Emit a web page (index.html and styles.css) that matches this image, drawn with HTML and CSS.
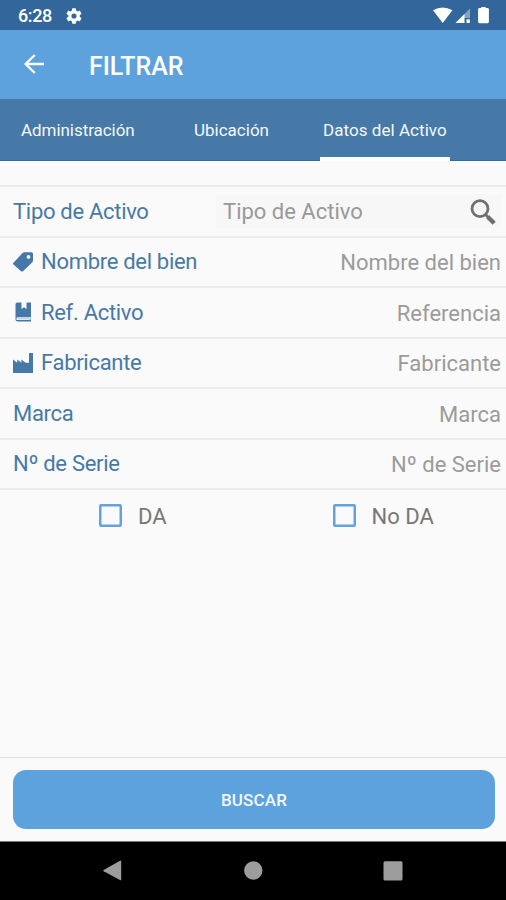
FILE: index.html
```html
<!DOCTYPE html>
<html lang="es">
<head>
<meta charset="utf-8">
<title>Filtrar</title>
<link rel="stylesheet" href="styles.css">
</head>
<body>
<div class="screen">
  <div class="status">
    <span class="time">6:28</span>
    <svg class="gear" viewBox="2 2 20 20"><path fill-rule="evenodd" d="M19.14 12.94a7.5 7.5 0 0 0 0-1.88l2.03-1.58a.5.5 0 0 0 .12-.61l-1.92-3.32a.5.5 0 0 0-.59-.22l-2.39.96a7 7 0 0 0-1.62-.94l-.36-2.54a.5.5 0 0 0-.48-.41h-3.84a.5.5 0 0 0-.47.41l-.36 2.54a7 7 0 0 0-1.62.94l-2.39-.96a.5.5 0 0 0-.59.22L2.74 8.87a.5.5 0 0 0 .12.61l2.03 1.58a7.5 7.5 0 0 0 0 1.88l-2.03 1.58a.5.5 0 0 0-.12.61l1.92 3.32c.12.22.37.29.59.22l2.39-.96c.5.38 1.03.7 1.62.94l.36 2.54c.05.24.24.41.48.41h3.84c.24 0 .44-.17.47-.41l.36-2.54a7 7 0 0 0 1.62-.94l2.39.96c.22.08.47 0 .59-.22l1.92-3.32a.5.5 0 0 0-.12-.61zM12 15.2a3.2 3.2 0 1 1 0-6.4 3.2 3.2 0 0 1 0 6.4z"/></svg>
    <svg class="indicators" viewBox="0 0 58 18"><path d="M0 3.2Q9.700-2.400 19.400 3.200L9.700 16z"/><path d="M37 1.500V11H31V16H22.500z" opacity=".4"/><path d="M31.500 7V16H22.500z"/><path d="M33.500 12.300h3.300V16h-3.300z"/><path d="M48.300 1V0h4.400v1h1.800q1.400 0 1.400 1.400v12.400q0 1.400-1.400 1.400h-8q-1.400 0-1.400-1.400V2.400Q45.100 1 46.500 1z"/></svg>
  </div>
  <header class="appbar">
    <svg class="back" viewBox="0 0 20 20"><path d="M20 10H1.500M10.800 1 1.600 10l9.200 9"/></svg>
    <h1>FILTRAR</h1>
  </header>
  <nav class="tabs">
    <span class="tab admin">Administración</span>
    <span class="tab place">Ubicación</span>
    <span class="tab active">Datos del Activo</span>
  </nav>
  <main>
    <div class="row type">
      <span class="label">Tipo de Activo</span>
      <div class="search"><span>Tipo de Activo</span>
        <svg viewBox="0 0 26 26"><circle cx="10" cy="9.700" r="8"/><path class="neck" d="m15.500 15.500 3 3"/><path class="handle" d="m17.700 17.700 6.500 6.500"/></svg>
      </div>
    </div>
    <div class="row"><svg class="icon" viewBox="0 0 20 20"><path fill-rule="evenodd" d="M0 11.200 9.300 1.300Q10.300.3 11.500.3H18.500Q20 .3 20 1.800V8.200Q20 9.500 19.100 10.400L10 19.200Q8.800 20 7.800 19L.5 12.600Q-.2 12 0 11.200zM15.500 3a1.900 1.900 0 1 0 0 3.800 1.900 1.900 0 0 0 0-3.800z"/></svg><span class="label">Nombre del bien</span><span class="value">Nombre del bien</span></div>
    <div class="row"><svg class="icon" viewBox="0 0 20 20"><path d="M4.500.5H8.500V7l2.500-1.700L13.500 7V.5H18V15.300H4.500Q3.500 15.300 3.500 16.500V18H17V16.500H18V19.500H5Q2.500 19.500 2.500 17V2.500Q2.500.5 4.500.5z"/><path d="M4.500 16.600H18" class="pages"/></svg><span class="label">Ref. Activo</span><span class="value">Referencia</span></div>
    <div class="row"><svg class="icon" viewBox="0 0 20 20"><path d="M0 6.500 4.200 9.800V6.500l4.200 3.300V6.500l4.200 3.300H16V0H20V20H0z"/></svg><span class="label">Fabricante</span><span class="value">Fabricante</span></div>
    <div class="row"><span class="label">Marca</span><span class="value">Marca</span></div>
    <div class="row"><span class="label">Nº de Serie</span><span class="value">Nº de Serie</span></div>
    <div class="checks">
      <div class="check"><i class="box"></i><span>DA</span></div>
      <div class="check"><i class="box"></i><span>No DA</span></div>
    </div>
  </main>
  <footer class="actions"><button>BUSCAR</button></footer>
  <div class="system">
    <svg viewBox="0 0 20 22"><path d="M.7 10.100 17 .7q1.200-.6 1.200.7v18q0 1.300-1.200.7L.7 11.300q-.8-.6 0-1.200z"/></svg>
    <svg viewBox="0 0 20 22"><circle cx="10.300" cy="10.500" r="9.200"/></svg>
    <svg viewBox="0 0 20 22"><rect x=".5" y="1.200" width="19" height="19.300" rx="1.500"/></svg>
  </div>
</div>
</body>
</html>
```
FILE: styles.css
```css
* { box-sizing: border-box; }
body { margin: 0; font-family: Roboto, sans-serif; background: #fafafa; }
.screen { width: 506px; height: 900px; display: flex; flex-direction: column; overflow: hidden; }
.status { height: 30px; background: #33669a; display: flex; align-items: center; padding: 2px 15px 0 18px; color: #fff; }
.time { width: 35px; font-size: 18px; font-weight: 500; line-height: 28px; letter-spacing: -0.400px; }
.gear { width: 16px; height: 16px; margin-left: 13px; fill: #fff; }
.indicators { width: 58px; height: 18px; margin-left: auto; fill: #fff; }
.appbar { height: 69px; background: #5ea2dd; display: flex; align-items: center; padding: 2px 0 0 24px; color: #fff; }
.back { width: 20px; height: 20px; margin-top: -3px; fill: none; stroke: #fff; stroke-width: 2.3; }
h1 { margin: 2px 0 0 45px; font-size: 25px; font-weight: 500; line-height: 30px; }
.tabs { height: 61.500px; flex-shrink: 0; background: #4678a8; border-bottom: 1px solid #336b9b; display: flex; color: #f4f8fc; font-size: 17px; line-height: 62px; }
.tab { white-space: nowrap; }
.admin { margin-left: 21px; width: 173px; letter-spacing: -0.050px; }
.place { width: 126px; }
.active { width: 130px; height: 61.500px; padding-left: 3px; border-bottom: 4px solid #fff; letter-spacing: 0.050px; }
main { flex: 1; padding-top: 24.500px; color: #777; font-size: 22px; }
.row { height: 50.500px; border-bottom: 2px solid #ececed; display: flex; align-items: center; padding: 0 5px 0 13px; white-space: nowrap; }
.type { height: 52.500px; border-top: 2px solid #ececed; }
.label { color: #4779a7; letter-spacing: -0.300px; }
.icon { width: 20px; height: 20px; margin-right: 8px; fill: #4678a8; }
.pages { stroke: #c3d2e0; stroke-width: 1.800; }
.value { margin-left: auto; color: #9b9b9b; position: relative; top: 1px; }
.search { margin-left: auto; width: 285px; height: 34px; background: #f7f7f7; display: flex; align-items: center; justify-content: space-between; padding: 0 5px 0 7px; color: #999; border-radius: 2px; }
.search svg { width: 26px; height: 26px; margin-top: 2px; fill: none; stroke: #707070; stroke-width: 2.800; }
.search .handle { stroke-width: 4.400; }
.checks { height: 53px; display: flex; padding-left: 99px; align-items: center; }
.check { width: 233.500px; flex-shrink: 0; display: flex; align-items: center; gap: 16px; }
.check:last-child { width: 150px; }
.box { width: 23px; height: 23px; border: 2px solid #62a3de; box-shadow: inset 0 0 0 0.500px #62a3de; border-radius: 2px; margin-top: -2px; }
.actions { height: 85px; flex-shrink: 0; border-top: 1px solid #dedfe0; border-bottom: 1px solid #777; padding: 12px 11px 0 13px; }
button { display: block; width: 482px; height: 59px; border: 0; border-radius: 13px; background: #5ea2dd; color: #f3f8fd; font: 500 17px Roboto, sans-serif; letter-spacing: 0.150px; padding: 0; }
.system { height: 58px; flex-shrink: 0; background: #000; display: flex; justify-content: space-between; align-items: center; padding: 0 103px; }
.system svg { width: 20px; height: 22px; fill: #9d9d9d; }
```
